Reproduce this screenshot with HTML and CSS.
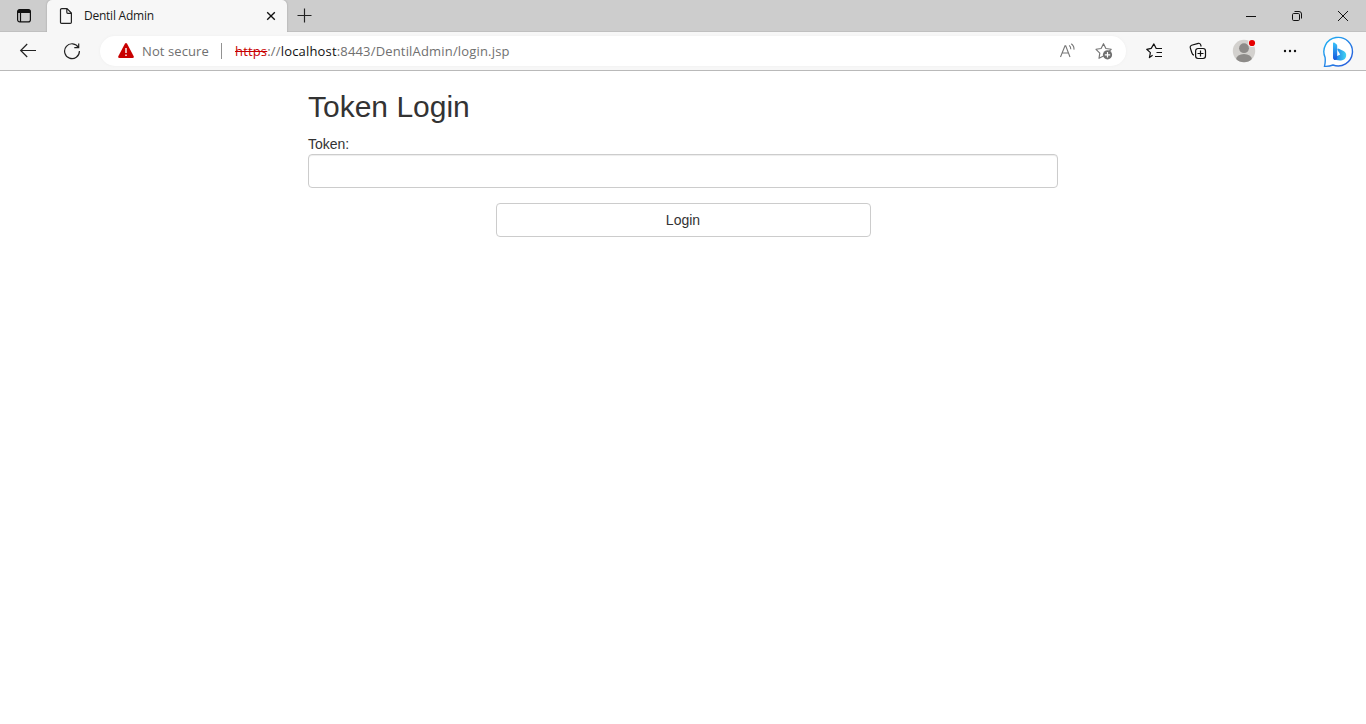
FILE: index.html
```html
<!DOCTYPE html>
<html lang="en">
<head>
<meta charset="utf-8">
<title>Dentil Admin</title>
<link rel="stylesheet" href="styles.css">
</head>
<body>
<header class="browser">
  <div class="tabstrip">
    <div class="tab-actions">
      <svg width="16" height="16" viewBox="0 0 16 16"><rect x="1.6" y="1.6" width="12.8" height="12.3" rx="2.2" fill="none" stroke="#111" stroke-width="1.2"/><path d="M1.5 5V3.5Q1.5 1.5 3.5 1.5h9Q14.500 1.500 14.500 3.500V5z" fill="#111"/><path d="M4.500 5v9" stroke="#111" stroke-width="1.200"/></svg>
    </div>
    <div class="tab">
      <svg class="file" width="14" height="18" viewBox="0 0 14 18"><path d="M2.800 1.600h5.200l4.400 4.500v9.200q0 1.100-1.100 1.100H2.600q-1.100 0-1.100-1.100V2.700q0-1.100 1.300-1.100zM7.800 1.800v3.500q0 1 1 1h3.500" fill="none" stroke="#222" stroke-width="1.200"/></svg>
      <span class="tab-title">Dentil Admin</span>
      <svg class="tab-close" width="10" height="10" viewBox="0 0 10 10"><path d="M1.200 1.200l7.600 7.600M8.800 1.200l-7.600 7.600" stroke="#111" stroke-width="1.350"/></svg>
    </div>
    <svg class="new-tab" width="15" height="15" viewBox="0 0 15 15"><path d="M7.500 .5v14M.5 7.500h14" stroke="#222" stroke-width="1.150"/></svg>
    <div class="window-controls">
      <svg width="12" height="12" viewBox="0 0 12 12"><path d="M1 6.500h10" stroke="#111"/></svg>
      <svg width="12" height="12" viewBox="0 0 12 12"><rect x="1.500" y="3.500" width="7" height="7" rx="1.200" fill="none" stroke="#111"/><path d="M3.500 1.500H8q2.500 0 2.500 2.500v4.500" fill="none" stroke="#111"/></svg>
      <svg width="12" height="12" viewBox="0 0 12 12"><path d="M1 1l10 10M11 1L1 11" stroke="#111"/></svg>
    </div>
  </div>
  <div class="toolbar">
    <svg class="back" width="18" height="16" viewBox="0 0 18 16"><path d="M17 7.500H2M8.200 1L1.700 7.500l6.500 6.500" fill="none" stroke="#222" stroke-width="1.200"/></svg>
    <svg class="refresh" width="18" height="18" viewBox="0 0 18 18"><path d="M15.500 5.600A7.400 7.400 0 1 0 16.400 9M15.700 1.400v4.300h-4.400" fill="none" stroke="#222" stroke-width="1.200"/></svg>
    <div class="address">
      <svg class="warning" width="18" height="16" viewBox="0 0 18 16"><path d="M7.900 .8q1.100-1.400 2.200 0l6.600 12.500q.6 1.700-1.200 1.700h-13q-1.800 0-1.200-1.700z" fill="#c80000"/><path d="M9 5v5M9 11.500v1.500" stroke="#fff" stroke-width="1.400"/></svg>
      <span class="security">Not secure</span>
      <span class="divider"></span>
      <span class="url"><span class="scheme">https</span>://<span class="host">localhost</span>:8443/DentilAdmin/login.jsp</span>
      <svg class="read-aloud" width="18" height="18" viewBox="0 0 18 18"><path d="M1.500 15L6 3.700h.7L11 15M3 11h6.700M10.200 3.400q1.600 1.300 1.600 3.800M12.300 1.700q3.200 2.400 2.600 6" fill="none" stroke="#767676" stroke-width="1.100"/></svg>
      <svg class="add-star" width="20" height="18" viewBox="0 0 20 18"><path d="M9.500 14L5 16.300l.8-5.200L2 7.300l5.100-.8L9.500 1.700l2.400 4.800 5.300.8-2.300 2.200" fill="none" stroke="#767676" stroke-width="1.150" stroke-linejoin="round"/><circle cx="13.500" cy="12.800" r="4.600" fill="#6e6e6e"/><path d="M13.500 10.100v5.400M10.800 12.800h5.400" stroke="#fff" stroke-width="1.200"/></svg>
    </div>
    <svg class="favorites" width="18" height="18" viewBox="0 0 18 18"><path d="M7.600 13.300L4.400 15.600l1-5L1.700 7.300l4.500-.9 2.700-4.500 2.300 4.600H17M11.500 10.500H17M10 14.500h7" fill="none" stroke="#111" stroke-width="1.200" stroke-linejoin="round"/></svg>
    <svg class="collections" width="18" height="18" viewBox="0 0 18 18"><rect x="6.600" y="6.500" width="9.900" height="10" rx="2.400" fill="none" stroke="#111" stroke-width="1.200"/><path d="M11.500 8.500v6M8.500 11.500h6M5 13.200q-1.500-.3-2-2L1.200 5.600Q.8 3.800 2.600 3.200L9.300 1.300q1.700-.3 2.300 1.300l.6 1.900" fill="none" stroke="#111" stroke-width="1.200"/></svg>
    <svg class="profile" width="24" height="24" viewBox="0 0 24 24"><defs><clipPath id="avatar"><circle cx="12" cy="12" r="11.200"/></clipPath></defs><circle cx="12" cy="12" r="11.200" fill="#d3d1ce"/><g clip-path="url(#avatar)" fill="#8d8b89"><circle cx="12" cy="9.200" r="4.900"/><ellipse cx="12" cy="20.300" rx="7.900" ry="5.200"/></g><circle cx="20" cy="4" r="3.900" fill="#f7f7f7"/><circle cx="20" cy="4" r="3.100" fill="#e60000"/></svg>
    <svg class="more" width="16" height="4" viewBox="0 0 16 4"><g fill="#111"><circle cx="3" cy="2" r="1.200"/><circle cx="8" cy="2" r="1.200"/><circle cx="13" cy="2" r="1.200"/></g></svg>
    <svg class="bing" width="34" height="34" viewBox="0 0 34 34"><defs><linearGradient id="ring" x1="0" y1="0" x2="1" y2="1"><stop stop-color="#20b5f5"/><stop offset="1" stop-color="#2854d9"/></linearGradient><linearGradient id="stem" x1="0" y1="0" x2="0" y2="1"><stop stop-color="#39c4fa"/><stop offset="1" stop-color="#1755dc"/></linearGradient><linearGradient id="bowl"><stop stop-color="#176be6"/><stop offset="1" stop-color="#43d4f1"/></linearGradient></defs><path d="M2.500 31.300Q3.600 27 3.100 22.500A14.300 14.300 0 1 1 11 30Q7 31.600 2.500 31.300z" fill="#fff" stroke="url(#ring)" stroke-width="1.400"/><path d="M15.500 15q-.6-2.100 1.300-1.300l4.800 2.300q3.100 1.800 2.500 5.200-.8 3.700-5 4.300-4.500.4-7.900-2.500l7-3.500z" fill="url(#bowl)"/><path d="M11 8.300q0-1.300 1.200-.7l2 1.300q1 .6 1 1.800v11.500q0 2.400-1.900 2.800-2.300 0-2.300-2.800z" fill="url(#stem)"/></svg>
  </div>
</header>
<main class="container">
  <h2 class="heading">Token Login</h2>
  <form class="login-form">
    <label class="label" for="token">Token:</label>
    <input class="token" id="token" type="text">
    <button class="submit" type="button">Login</button>
  </form>
</main>
</body>
</html>
```
FILE: styles.css
```css
* { box-sizing: border-box; }
body { margin: 0; background: #fff; color: #333; font: 14px/20px "Liberation Sans", Arial, sans-serif; }
svg { display: block; flex: none; }
.browser { font-family: "Open Sans", "Noto Sans", sans-serif; background: #f7f7f7; height: 71px; border-bottom: 1px solid #b9b9b9; }
.tabstrip { display: flex; height: 32px; background: #cdcdcd; box-shadow: inset 0 -1px #c0c0c0; }
.tab-actions { width: 47px; padding: 8px 0 0 16px; }
.tab { width: 240px; display: flex; align-items: center; background: #f7f7f7; border-radius: 5px 5px 0 0; padding: 0 11px 0 12px; box-shadow: 0 0 2px #999; clip-path: inset(0 -3px 0 -3px); }
.tab-title { margin-left: 11px; font-size: 12px; line-height: 16px; color: #1a1a1a; letter-spacing: -.24px; white-space: nowrap; }
.tab-close { margin-left: auto; }
.new-tab { margin: 8px 0 0 10px; }
.window-controls { display: flex; gap: 34px; margin: 10px 17px 0 auto; }
.toolbar { display: flex; align-items: center; height: 38px; }
.back { margin-left: 19px; }
.refresh { margin-left: 26px; }
.address { display: flex; align-items: center; width: 1026px; height: 30px; margin-left: 19px; padding: 0 12px 0 17px; border-radius: 15px; background: #fff; box-shadow: 0 0 3px #eee; }
.security { margin-left: 7px; width: 69px; font-size: 13px; letter-spacing: .1px; color: #707070; white-space: nowrap; }
.divider { width: 1px; height: 16px; margin-left: 10px; background: #929292; }
.url { margin-left: 13px; font-size: 13px; letter-spacing: .17px; color: #707070; white-space: nowrap; }
.scheme { color: #c80000; text-decoration: line-through; }
.host { color: #111; }
.read-aloud { margin-left: auto; }
.add-star { margin-left: 17px; }
.favorites { margin-left: 19px; }
.collections { margin-left: 26px; }
.profile { margin-left: 25px; }
.more { margin-left: 26px; }
.bing { margin: 1px 0 0 24px; }
.container { width: 750px; margin: 0 auto; padding-top: 19px; }
.heading { margin: 0 0 11px; font-size: 30px; line-height: 33px; font-weight: 500; }
.login-form { display: flex; flex-direction: column; }
.token { height: 34px; padding: 6px 12px; border: 1px solid #ccc; border-radius: 4px; box-shadow: inset 0 1px 1px rgba(0,0,0,.075); font: inherit; }
.submit { width: 375px; height: 34px; margin: 15px auto 0; border: 1px solid #ccc; border-radius: 4px; background: #fff; color: #333; font: inherit; }
```
